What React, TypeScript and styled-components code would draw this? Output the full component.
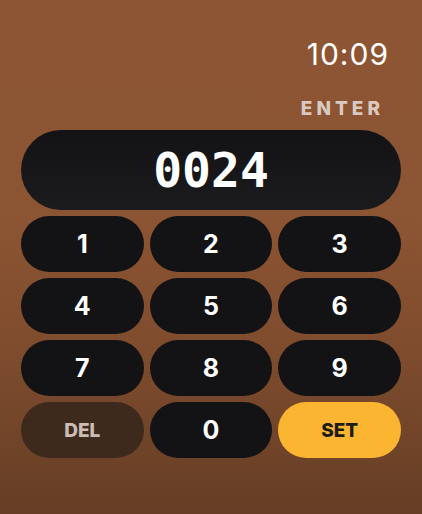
import styled, { createGlobalStyle } from "styled-components";

const GlobalStyle = createGlobalStyle`
  html, body {
    margin: 0;
    padding: 0;
    background: #7a4a2c;
  }
  * {
    box-sizing: border-box;
  }
`;

const Screen = styled.div`
  width: 422px;
  height: 514px;
  padding: 40px 21px 0;
  display: flex;
  flex-direction: column;
  background: linear-gradient(
    180deg,
    #8d5533 0%,
    #8b5432 45%,
    #7d4b2d 70%,
    #653e25 100%
  );
  font-family: Inter, "Noto Sans", sans-serif;
`;

const Clock = styled.div`
  align-self: flex-end;
  margin-right: 12px;
  font-size: 30px;
  line-height: 29px;
  font-weight: 400;
  letter-spacing: 1px;
  color: #ffffff;
`;

const Label = styled.div`
  align-self: flex-end;
  margin-top: 30px;
  margin-right: 17px;
  font-size: 19px;
  line-height: 19px;
  font-weight: 800;
  letter-spacing: 4px;
  color: #d9c9c0;
`;

const Display = styled.div`
  margin-top: 12px;
  height: 80px;
  border-radius: 40px;
  background: linear-gradient(180deg, #131315 0%, #1b1b1e 100%);
  display: flex;
  align-items: center;
  justify-content: center;
  font-family: "DejaVu Sans Mono", "Liberation Mono", monospace;
  font-weight: 700;
  font-size: 48px;
  color: #ffffff;
`;

const Pad = styled.div`
  margin-top: 6px;
  display: grid;
  grid-template-columns: repeat(3, 1fr);
  grid-auto-rows: 56px;
  gap: 6px;
`;

type Kind = "digit" | "del" | "set";

const Key = styled.button<{ $kind: Kind }>`
  border: none;
  border-radius: 28px;
  display: flex;
  align-items: center;
  justify-content: center;
  font-family: Inter, "Noto Sans", sans-serif;
  font-weight: ${(p) => (p.$kind === "digit" ? 700 : 800)};
  padding: 0;
  cursor: pointer;
  font-size: ${(p) => (p.$kind === "digit" ? "25px" : "19px")};
  background: ${(p) =>
    p.$kind === "set" ? "#fbb530" : p.$kind === "del" ? "#3e2a1d" : "#131316"};
  color: ${(p) =>
    p.$kind === "set" ? "#1d1b19" : p.$kind === "del" ? "#cbbcb6" : "#ffffff"};
`;

const keys: { label: string; kind: Kind }[] = [
  { label: "1", kind: "digit" },
  { label: "2", kind: "digit" },
  { label: "3", kind: "digit" },
  { label: "4", kind: "digit" },
  { label: "5", kind: "digit" },
  { label: "6", kind: "digit" },
  { label: "7", kind: "digit" },
  { label: "8", kind: "digit" },
  { label: "9", kind: "digit" },
  { label: "DEL", kind: "del" },
  { label: "0", kind: "digit" },
  { label: "SET", kind: "set" },
];

export default function App() {
  return (
    <>
      <GlobalStyle />
      <Screen>
        <Clock>10:09</Clock>
        <Label>ENTER</Label>
        <Display>0024</Display>
        <Pad>
          {keys.map((k) => (
            <Key key={k.label} $kind={k.kind} type="button">
              {k.label}
            </Key>
          ))}
        </Pad>
      </Screen>
    </>
  );
}
